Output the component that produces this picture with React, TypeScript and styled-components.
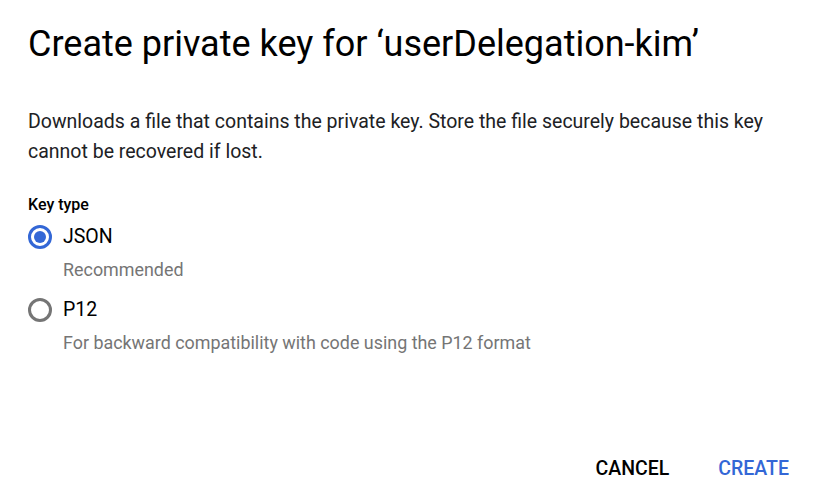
import { useState } from "react";
import styled, { createGlobalStyle } from "styled-components";

const GlobalStyle = createGlobalStyle`
  html, body {
    margin: 0;
    padding: 0;
    background: #ffffff;
  }
  body {
    font-family: Roboto, "Noto Sans", Arial, sans-serif;
    color: #202124;
  }
`;

const options = [
  { id: "json", label: "JSON", hint: "Recommended" },
  { id: "p12", label: "P12", hint: "For backward compatibility with code using the P12 format" },
];

const App = () => {
  const [keyType, setKeyType] = useState("json");

  return (
    <>
      <GlobalStyle />
      <Dialog>
        <Title>Create private key for ‘userDelegation-kim’</Title>
        <Description>
          Downloads a file that contains the private key. Store the file securely because this key
          <br />
          cannot be recovered if lost.
        </Description>
        <Fieldset>
          <Legend>Key type</Legend>
          {options.map((opt) => (
            <Option key={opt.id}>
              <RadioRow onClick={() => setKeyType(opt.id)}>
                <Radio $checked={keyType === opt.id} />
                <OptionLabel>{opt.label}</OptionLabel>
              </RadioRow>
              <Hint>{opt.hint}</Hint>
            </Option>
          ))}
        </Fieldset>
        <Actions>
          <TextButton>CANCEL</TextButton>
          <TextButton $primary>CREATE</TextButton>
        </Actions>
      </Dialog>
    </>
  );
};

export default App;

const Dialog = styled.div`
  width: 814px;
  height: 493px;
  box-sizing: border-box;
  padding: 20px 17px 0 28px;
  display: flex;
  flex-direction: column;
`;

const Title = styled.h1`
  margin: 0;
  font-size: 36px;
  font-weight: 400;
  line-height: 48px;
  color: #000000;
  white-space: nowrap;
`;

const Description = styled.p`
  margin: 39px 0 0;
  font-size: 19.5px;
  line-height: 30px;
  color: #202124;
  white-space: nowrap;
`;

const Fieldset = styled.div`
  margin-top: 28px;
  display: flex;
  flex-direction: column;
`;

const Legend = styled.div`
  font-size: 16px;
  font-weight: 500;
  line-height: 20px;
  color: #000000;
`;

const Option = styled.div`
  display: flex;
  flex-direction: column;
  margin-top: 6px;
  & + & {
    margin-top: 12px;
  }
`;

const RadioRow = styled.div`
  display: flex;
  align-items: center;
  gap: 11px;
  height: 32px;
  cursor: pointer;
`;

const Radio = styled.span<{ $checked?: boolean }>`
  width: 24px;
  height: 24px;
  box-sizing: border-box;
  border-radius: 50%;
  border: 3px solid ${(p) => (p.$checked ? "#3367d6" : "#757575")};
  display: flex;
  align-items: center;
  justify-content: center;
  &::after {
    content: "";
    width: 12px;
    height: 12px;
    border-radius: 50%;
    background: #3367d6;
    display: ${(p) => (p.$checked ? "block" : "none")};
  }
`;

const OptionLabel = styled.span`
  font-size: 19.5px;
  line-height: 24px;
  color: #000000;
`;

const Hint = styled.div`
  padding-left: 35px;
  margin-top: 5px;
  font-size: 17.9px;
  line-height: 24px;
  color: #757575;
  white-space: nowrap;
`;

const Actions = styled.div`
  margin-top: auto;
  display: flex;
  justify-content: flex-end;
  gap: 33px;
  padding-bottom: 7px;
`;

const TextButton = styled.button<{ $primary?: boolean }>`
  background: none;
  border: none;
  padding: 0 8px;
  height: 36px;
  font-family: Roboto, Arial, sans-serif;
  font-size: 19.5px;
  font-weight: 500;
  color: ${(p) => (p.$primary ? "#3367d6" : "#000000")};
  cursor: pointer;
`;
